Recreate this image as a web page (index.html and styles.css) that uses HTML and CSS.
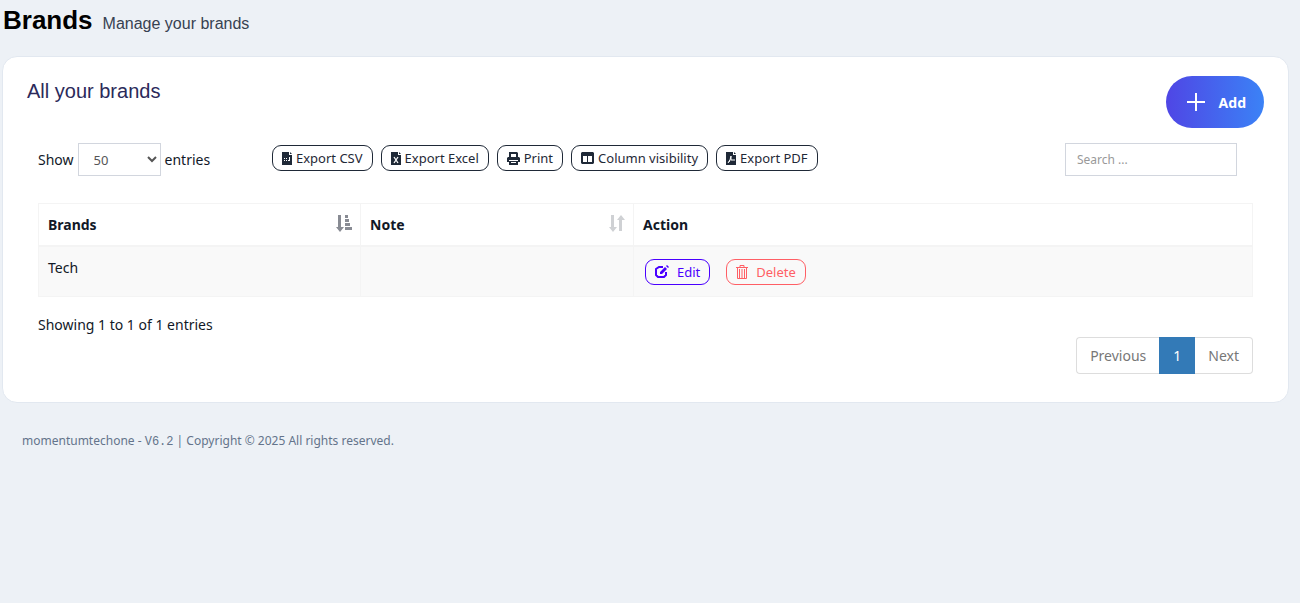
FILE: index.html
```html
<!DOCTYPE html>
<html lang="en">
<head>
	<meta charset="UTF-8">
	<title>Brands</title>
	<link rel="stylesheet" href="styles.css">
</head>
<body>

<header class="content-header">
	<h1>Brands</h1>
	<small>Manage your brands</small>
</header>

<main class="box">
	<div class="box-header">
		<h2 class="box-title">All your brands</h2>
		<button class="btn-add" type="button">
			<svg width="20" height="20" viewBox="0 0 20 20"><path d="M10 1v18M1 10h18" stroke="#fff" stroke-width="2"/></svg>
			Add
		</button>
	</div>

	<div class="box-body">
		<div class="toolbar">
			<label class="length">Show
				<select>
					<option>25</option>
					<option selected>50</option>
					<option>100</option>
				</select>
				entries
			</label>
			<div class="export-buttons">
				<button class="btn" type="button">
					<svg width="10" height="13" viewBox="0 0 10 13"><path d="M0 0h7v3h3v10H0zM8 0l2 2H8z"/><path d="M2 6h1v1H2zM4 6h1v1H4zM2 8h1v1H2zM4 8h1v1H4zM7 5h1v4H6V8h1z" fill="#fff"/></svg>
					Export CSV
				</button>
				<button class="btn" type="button">
					<svg width="10" height="13" viewBox="0 0 10 13"><path d="M0 0h7v3h3v10H0zM8 0l2 2H8z"/><path d="M3 5l4 6M7 5l-4 6" stroke="#fff" stroke-width="1.3"/></svg>
					Export Excel
				</button>
				<button class="btn" type="button">
					<svg width="13" height="13" viewBox="0 0 13 13"><path d="M2 0h8l1 1v4H9V2H4v3H2zM1 5h11l1 1v4h-2V8H2v2H0V6zM2 9h9v4H2zM4 10v1h5v-1z" fill-rule="evenodd"/></svg>
					Print
				</button>
				<button class="btn" type="button">
					<svg width="13" height="12" viewBox="0 0 13 12"><path d="M1 0h11l1 1v10l-1 1H1l-1-1V1zM2 4v6h4V4zM7 4v6h4V4z" fill-rule="evenodd"/></svg>
					Column visibility
				</button>
				<button class="btn" type="button">
					<svg width="10" height="13" viewBox="0 0 10 13"><path d="M0 0h7v3h3v10H0zM8 0l2 2H8z"/><path d="M2 11l2-3 1-4v4h4M4 8l-1 2" fill="none" stroke="#fff"/></svg>
					Export PDF
				</button>
			</div>
			<input class="search" type="search" placeholder="Search ..." aria-label="Search">
		</div>

		<table class="brands-table">
			<thead>
				<tr>
					<th class="col-name"><div class="th-inner">Brands
						<svg class="sorted" width="16" height="17" viewBox="0 0 16 17"><path d="M2 0h3v12h3l-4 5-4-5h2zM9 0h3v3H9zM9 4h4v3H9zM9 8h5v3H9zM9 12h7v3H9z"/></svg>
					</div></th>
					<th class="col-note"><div class="th-inner">Note
						<svg class="unsorted" width="16" height="17" viewBox="0 0 16 17"><path d="M2 0h3v12h3l-4 5-4-5h2zM10 16h3V5h3l-4-5-4 5h2z"/></svg>
					</div></th>
					<th>Action</th>
				</tr>
			</thead>
			<tbody>
				<tr>
					<td>Tech</td>
					<td></td>
					<td>
						<div class="actions">
							<button class="btn btn-edit" type="button">
								<svg width="14" height="13" viewBox="0 0 14 13"><path d="M8 2H4L1 4v6l2 2h6l2-2V7" fill="none" stroke="currentColor" stroke-width="2"/><path d="M5 9V7l5-5 2 2-5 5zM11 1l1-1 2 2-1 1z"/></svg>
								Edit
							</button>
							<button class="btn btn-delete" type="button">
								<svg width="12" height="14" viewBox="0 0 12 14"><path d="M0 2.500h12M4 2V.5h4V2M1.500 3v10.500h9V3M3.500 4v9M6 4v9M8.500 4v9" fill="none" stroke="currentColor"/></svg>
								Delete
							</button>
						</div>
					</td>
				</tr>
			</tbody>
		</table>

		<div class="info">Showing 1 to 1 of 1 entries</div>
		<nav class="pagination">
			<a href="#">Previous</a>
			<a class="active" href="#">1</a>
			<a href="#">Next</a>
		</nav>
	</div>
</main>

<footer class="footer">momentumtechone - <span class="version">V6.2</span> | Copyright © 2025 All rights reserved.</footer>

</body>
</html>
```
FILE: styles.css
```css
* {
	box-sizing: border-box;
}
body {
	margin: 0;
	background-color: #edf1f6;
	color: #111827;
	font: 14px/20px "Noto Sans", sans-serif;
}
button,
input,
select {
	font-family: inherit;
}
svg {
	fill: currentColor;
	flex: none;
}
.content-header {
	display: flex;
	align-items: baseline;
	gap: 10px;
	height: 56px;
	padding: 4px 3px;
	font-family: "Liberation Sans", Arial, sans-serif;
}
.content-header h1 {
	margin: 0;
	color: #000;
	font-size: 26px;
	line-height: 32px;
}
.content-header small {
	color: #374151;
	font-size: 16px;
}
.box {
	margin: 0 11px 0 2px;
	padding: 19px 24px 28px;
	border: 1px solid #e2e8f0;
	border-radius: 15px;
	background-color: #fff;
}
.box-header {
	display: flex;
	justify-content: space-between;
}
.box-title {
	margin: 3px 0 0;
	color: #2b2a5a;
	font: 20px/24px "Liberation Sans", Arial, sans-serif;
}
.btn-add {
	display: flex;
	align-items: center;
	gap: 13px;
	height: 52px;
	padding: 0 18px 0 20px;
	border: none;
	border-radius: 26px;
	background: linear-gradient(to right, #4f46e5, #3b82f6);
	color: #fff;
	font-size: 14px;
	font-weight: bold;
}
.box-body {
	padding: 15px 11px 0;
}
.toolbar {
	display: flex;
	align-items: center;
	margin-bottom: 27px;
}
.length {
	display: flex;
	align-items: center;
	gap: 4px;
	width: 234px;
}
.length select {
	width: 83px;
	height: 33px;
	padding: 0 0 0 11px;
	border: 1px solid #d2d6de;
	background-color: #fff;
	color: #555;
	font-size: 13px;
}
.export-buttons {
	display: flex;
	gap: 8px;
	margin-bottom: 3px;
}
.btn {
	display: flex;
	align-items: center;
	gap: 4px;
	height: 26px;
	padding: 0 9px;
	border: 1px solid #1f2937;
	border-radius: 9px;
	background-color: transparent;
	color: #1f2937;
	font-size: 13px;
}
.search {
	width: 172px;
	height: 33px;
	margin: 0 16px 0 auto;
	padding: 0 11px;
	border: 1px solid #d2d6de;
	font-size: 12px;
}
.search::placeholder {
	color: #999;
}
.brands-table {
	width: 100%;
	border: 1px solid #f4f4f4;
	border-collapse: collapse;
}
.brands-table th,
.brands-table td {
	border: 1px solid #f4f4f4;
	text-align: left;
	vertical-align: top;
}
.brands-table th {
	height: 42px;
	padding: 11px 8px 8px 9px;
	border-bottom-width: 2px;
}
.brands-table td {
	padding: 11px 9px;
	background-color: #f9f9f9;
}
.col-name {
	width: 322px;
}
.col-note {
	width: 273px;
}
.th-inner {
	display: flex;
	justify-content: space-between;
}
.sorted {
	color: #888b93;
}
.unsorted {
	color: #cfd1d4;
}
.actions {
	display: flex;
	gap: 16px;
	padding: 1px 2px 0;
}
.actions .btn {
	gap: 8px;
}
.actions .btn-edit {
	border-color: #4a00ff;
	color: #4a00ff;
}
.actions .btn-delete {
	border-color: #ff5f65;
	color: #ff5f65;
}
.info {
	margin-top: 18px;
}
.pagination {
	display: flex;
	justify-content: flex-end;
	margin-top: 2px;
}
.pagination a {
	padding: 8px 13px;
	border: 1px solid #ddd;
	color: #777;
	line-height: 19px;
	text-decoration: none;
}
.pagination a:first-child {
	border-right: none;
	border-radius: 4px 0 0 4px;
}
.pagination a:last-child {
	border-left: none;
	border-radius: 0 4px 4px 0;
}
.pagination .active {
	border-color: #337ab7;
	background-color: #337ab7;
	color: #fff;
}
.footer {
	padding: 28px 22px;
	color: #64748b;
	font-size: 12px;
}
.version {
	font-family: "Liberation Mono", monospace;
}
```
